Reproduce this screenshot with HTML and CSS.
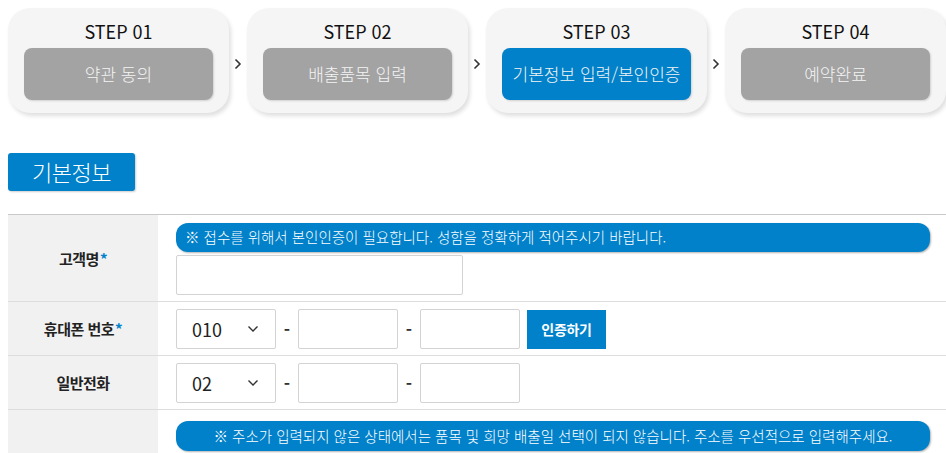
FILE: index.html
```html
<!DOCTYPE html>
<html lang="ko">
<head>
    <meta charset="UTF-8">
    <meta name="viewport" content="width=device-width, initial-scale=1.0">
    <title>기본정보 입력</title>
    <link rel="stylesheet" href="styles.css">
</head>
<body>
    <div class="page">
        <ol class="steps">
            <li class="step">
                <div class="step-title">STEP 01</div>
                <div class="step-btn">약관 동의</div>
            </li>
            <li class="step-arrow">
                <svg width="8" height="12" viewBox="0 0 8 12"><path d="M1.5 1.5 L6 6 L1.5 10.5" fill="none" stroke="#333" stroke-width="1.6"/></svg>
            </li>
            <li class="step">
                <div class="step-title">STEP 02</div>
                <div class="step-btn">배출품목 입력</div>
            </li>
            <li class="step-arrow">
                <svg width="8" height="12" viewBox="0 0 8 12"><path d="M1.5 1.5 L6 6 L1.5 10.5" fill="none" stroke="#333" stroke-width="1.6"/></svg>
            </li>
            <li class="step">
                <div class="step-title">STEP 03</div>
                <div class="step-btn active">기본정보 입력/본인인증</div>
            </li>
            <li class="step-arrow">
                <svg width="8" height="12" viewBox="0 0 8 12"><path d="M1.5 1.5 L6 6 L1.5 10.5" fill="none" stroke="#333" stroke-width="1.6"/></svg>
            </li>
            <li class="step">
                <div class="step-title">STEP 04</div>
                <div class="step-btn">예약완료</div>
            </li>
        </ol>

        <h2 class="section-title">기본정보</h2>

        <table class="form-table">
            <tr class="row-name">
                <th>고객명<span class="req">*</span></th>
                <td>
                    <p class="notice">※ 접수를 위해서 본인인증이 필요합니다. 성함을 정확하게 적어주시기 바랍니다.</p>
                    <input type="text" class="input-name">
                </td>
            </tr>
            <tr>
                <th>휴대폰 번호<span class="req">*</span></th>
                <td>
                    <div class="phone">
                        <div class="select-box">
                            <span>010</span>
                            <svg width="12" height="8" viewBox="0 0 12 8"><path d="M1.5 1.5 L6 6 L10.5 1.5" fill="none" stroke="#333" stroke-width="1.4"/></svg>
                        </div>
                        <span class="dash">-</span>
                        <input type="text" class="input-num">
                        <span class="dash">-</span>
                        <input type="text" class="input-num">
                        <button class="btn-auth">인증하기</button>
                    </div>
                </td>
            </tr>
            <tr>
                <th>일반전화</th>
                <td>
                    <div class="phone">
                        <div class="select-box">
                            <span>02</span>
                            <svg width="12" height="8" viewBox="0 0 12 8"><path d="M1.5 1.5 L6 6 L10.5 1.5" fill="none" stroke="#333" stroke-width="1.4"/></svg>
                        </div>
                        <span class="dash">-</span>
                        <input type="text" class="input-num">
                        <span class="dash">-</span>
                        <input type="text" class="input-num">
                    </div>
                </td>
            </tr>
            <tr class="row-addr">
                <th></th>
                <td>
                    <p class="notice center">※ 주소가 입력되지 않은 상태에서는 품목 및 희망 배출일 선택이 되지 않습니다. 주소를 우선적으로 입력해주세요.</p>
                </td>
            </tr>
        </table>
    </div>
</body>
</html>
```

FILE: styles.css
```css
body {
    margin: 0;
    background-color: #fff;
    font-family: "Noto Sans CJK KR", "Noto Sans", sans-serif;
    color: #222;
    overflow: hidden;
}
.page {
    width: 938px;
    padding: 8px 0 0 8px;
}
.steps {
    display: flex;
    align-items: center;
    list-style: none;
    margin: 0;
    padding: 0;
}
.step {
    width: 221px;
    box-sizing: border-box;
    padding: 10px 16px 13px;
    background-color: #f5f5f5;
    border-radius: 22px;
    box-shadow: 2px 3px 4px rgba(0,0,0,0.13);
    text-align: center;
}
.step-title {
    font-size: 18px;
    line-height: 26px;
    font-weight: 400;
    color: #111;
    margin-bottom: 4px;
}
.step-btn {
    height: 52px;
    line-height: 52px;
    background-color: #a3a3a3;
    border-radius: 8px;
    color: #f4f4f4;
    font-size: 17px;
    font-weight: 300;
    box-shadow: 1px 1px 2px rgba(0,0,0,0.15);
}
.step-btn.active {
    background-color: #0081c9;
}
.step-arrow {
    width: 18px;
    display: flex;
    justify-content: center;
    padding-top: 7px;
}
.section-title {
    display: inline-block;
    margin: 40px 0 0;
    height: 38px;
    line-height: 36px;
    padding: 0 24px;
    background-color: #0081c9;
    color: #fff;
    font-size: 22px;
    font-weight: 300;
    letter-spacing: -0.5px;
    border-radius: 3px;
    box-shadow: 1px 1px 2px rgba(0,0,0,0.2);
}
.form-table {
    width: 938px;
    margin-top: 23px;
    border-collapse: collapse;
    border-top: 1px solid #c9c9c9;
}
.form-table th {
    width: 150px;
    background-color: #f1f1f1;
    font-size: 15px;
    font-weight: 700;
    color: #222;
    letter-spacing: -0.5px;
    border-bottom: 1px solid #ddd;
    padding: 0;
}
.form-table td {
    padding: 7px 16px 6px 18px;
    border-bottom: 1px solid #ddd;
}
.form-table .row-name td {
    padding-top: 8px;
}
.req {
    color: #0081c9;
    margin-left: 1px;
}
.notice {
    margin: 0;
    height: 29px;
    line-height: 28px;
    padding: 0 9px;
    background-color: #0081c9;
    color: #fff;
    font-size: 14.5px;
    font-weight: 300;
    border-radius: 12px;
    box-shadow: 1px 1px 2px rgba(0,0,0,0.3);
}
.notice.center {
    text-align: center;
    height: 30px;
    line-height: 30px;
}
.input-name {
    display: block;
    margin-top: 3px;
    width: 287px;
    height: 40px;
    box-sizing: border-box;
    border: 1px solid #d3d3d3;
    border-radius: 2px;
}
.phone {
    display: flex;
    align-items: center;
}
.select-box {
    width: 100px;
    height: 40px;
    box-sizing: border-box;
    border: 1px solid #d3d3d3;
    border-radius: 2px;
    display: flex;
    align-items: center;
    justify-content: space-between;
    padding: 0 16px 0 15px;
    font-size: 18px;
    color: #222;
}
.dash {
    width: 22px;
    text-align: center;
    font-size: 17px;
    font-weight: 700;
    color: #333;
    margin-top: -2px;
}
.input-num {
    width: 100px;
    height: 40px;
    box-sizing: border-box;
    border: 1px solid #d3d3d3;
    border-radius: 2px;
}
.btn-auth {
    margin-left: 7px;
    width: 79px;
    height: 39px;
    border: none;
    background-color: #0081c9;
    color: #fff;
    font-family: inherit;
    font-size: 14px;
    font-weight: 700;
    letter-spacing: -0.3px;
    cursor: pointer;
}
.row-addr td {
    padding-top: 8px;
    border-bottom: none;
}
.row-addr th {
    border-bottom: none;
    height: 50px;
}
```
